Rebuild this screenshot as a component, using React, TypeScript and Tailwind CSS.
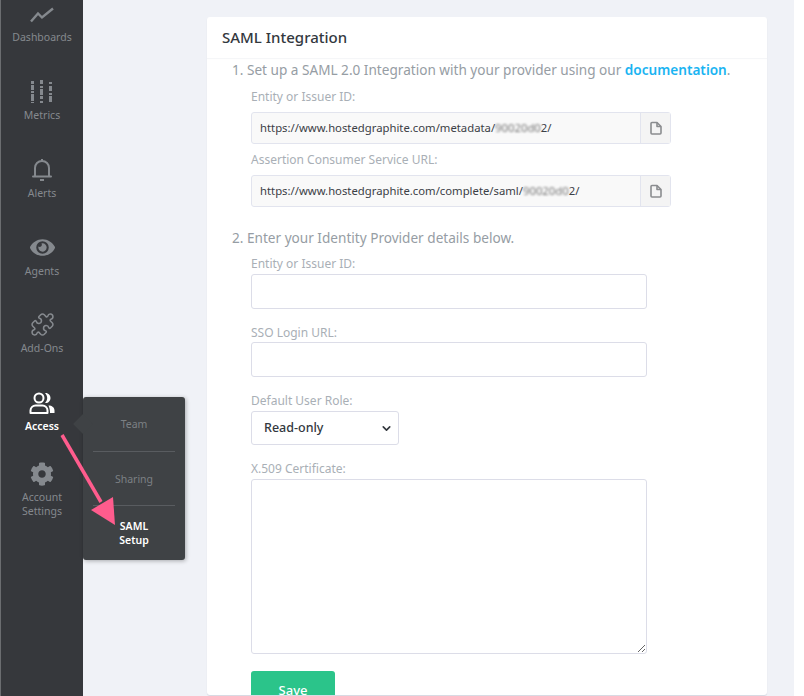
import { ChevronDown, Puzzle } from 'lucide-react'
import type { ReactNode } from 'react'
import { FaCog, FaEye } from 'react-icons/fa'

const font = 'font-["Noto_Sans",sans-serif]'

function DashboardsIcon() {
  return (
    <svg className="mb-[3px]" width="24" height="16" viewBox="0 0 24 16" fill="none" stroke="currentColor" strokeWidth="2.400">
      <polyline points="1,14.500 8,6.500 12,10.500 23,1.500" />
    </svg>
  )
}

function MetricsIcon() {
  return (
    <svg width="22" height="24" viewBox="0 0 22 24" fill="currentColor">
      <rect x="0" y="1" width="3" height="3" />
      <rect x="0" y="5" width="3" height="5" />
      <rect x="0" y="11" width="3" height="2" />
      <rect x="0" y="14" width="3" height="7" />
      <rect x="0" y="22" width="3" height="1" />
      <rect x="9" y="0" width="3" height="4" />
      <rect x="9" y="6" width="3" height="2" />
      <rect x="9" y="9" width="3" height="6" />
      <rect x="9" y="16" width="3" height="3" />
      <rect x="9" y="21" width="3" height="2" />
      <rect x="18" y="2" width="3" height="2" />
      <rect x="18" y="6" width="3" height="5" />
      <rect x="18" y="13" width="3" height="2" />
      <rect x="18" y="16" width="3" height="6" />
    </svg>
  )
}

function BellIcon() {
  return (
    <svg width="20" height="24" viewBox="0 0 20 24" fill="none" stroke="currentColor" strokeWidth="2">
      <path d="M10 1v2" />
      <path d="M3 18V10c0-4 3-7 7-7s7 3 7 7v8" />
      <path d="M1 18.500h18" strokeLinecap="round" />
      <path d="M8 22h4" strokeWidth="2" />
    </svg>
  )
}

function AccessIcon() {
  return (
    <svg width="27" height="23" viewBox="0 0 27 23" fill="none">
      <circle cx="10" cy="6" r="4.500" stroke="currentColor" strokeWidth="2" />
      <path d="M1.500 21v-2.500c0-3 2.500-5 5-5h7c2.500 0 5 2 5 5V21z" stroke="currentColor" strokeWidth="2" strokeLinejoin="round" />
      <path d="M16 1c3-.5 5.500 2 5.500 5s-2.500 5.500-5.500 5c1.500-1.500 2.200-3.200 2.200-5S17.500 2.500 16 1z" fill="currentColor" />
      <path d="M19.500 13.500c3.500 0 6 2 6 5V21h-4.500c0-3-.5-5-1.500-7.500z" fill="currentColor" />
    </svg>
  )
}

function NavItem({ icon, label, active }: { icon: ReactNode; label: ReactNode; active?: boolean }) {
  return (
    <div className={`flex h-[78px] flex-col items-center ${active ? 'text-white' : 'text-[#85898e]'}`}>
      <div className="flex h-[32px] items-end justify-center">{icon}</div>
      <span className={`mt-[4px] text-center text-[10.500px] leading-[14px] ${active ? 'font-semibold' : ''}`}>{label}</span>
    </div>
  )
}

function CopyIcon() {
  return (
    <svg width="12" height="14" viewBox="0 0 12 14" fill="none" stroke="#8a8c8f" strokeWidth="1.600">
      <path d="M1 2.500q0-1 1-1h5l4 4v6.500q0 1-1 1H2q-1 0-1-1z" strokeLinejoin="round" />
      <path d="M7 1.500v4h4" strokeLinejoin="round" />
    </svg>
  )
}

function CopyField({ prefix, suffix }: { prefix: string; suffix: string }) {
  return (
    <div className="flex h-[32px] w-[420px] rounded-[3px] border border-[#e2e4ee] bg-[#f9f9f9]">
      <div className="flex w-[389px] items-center border-r border-[#e2e4ee] pl-[8px] text-[11.300px] text-[#3b4046]">
        <span>{prefix}</span>
        <span className="inline-block text-[#777777] blur-[1px]">90020d0</span>
        <span>{suffix}</span>
      </div>
      <div className="flex flex-1 items-center justify-center bg-[#f4f4f4]">
        <CopyIcon />
      </div>
    </div>
  )
}

function Label({ children, className = '' }: { children: ReactNode; className?: string }) {
  return <label className={`block text-[12px] leading-[16px] text-[#a9afb6] ${className}`}>{children}</label>
}

function App() {
  return (
    <div className={`relative flex h-[696px] w-[804px] overflow-hidden bg-white ${font}`}>
      <aside className="h-full w-[83px] shrink-0 overflow-hidden border-l border-[#6b6d70] bg-[#36383c] pt-[1px]">
        <div className="-mt-[7px]">
          <NavItem icon={<DashboardsIcon />} label="Dashboards" />
          <NavItem icon={<MetricsIcon />} label="Metrics" />
          <NavItem icon={<BellIcon />} label="Alerts" />
          <NavItem icon={<FaEye size={25} />} label="Agents" />
          <div className="-mt-[1px]">
            <NavItem icon={<Puzzle size={25} strokeWidth={1.500} />} label="Add-Ons" />
          </div>
          <NavItem icon={<AccessIcon />} label="Access" active />
          <div className="-mt-[7px]">
            <NavItem icon={<FaCog size={24} />} label={<>Account<br />Settings</>} />
          </div>
        </div>
      </aside>

      <main className="h-full w-[711px] shrink-0 bg-[#f0f2f7] pl-[124px] pt-[17px]">
        <section className="h-[678px] w-[560px] overflow-hidden rounded-[3px] bg-white shadow-[0_1px_1px_#d5d7e0]">
          <h2 className="flex h-[41px] items-center pl-[15px] text-[15px] font-medium text-[#33383e] shadow-[0_1px_1px_#f5f6f8]">SAML Integration</h2>
          <div className="pl-[25px] text-[13.600px] text-[#969da4]">
            <p className="mt-[2px] h-[19px] leading-[19px]">
              1. Set up a SAML 2.0 Integration with your provider using our{' '}
              <a className="font-semibold text-[#1ab4f2]">documentation</a>.
            </p>
            <div className="pl-[19px]">
              <Label className="mt-[10px]">Entity or Issuer ID:</Label>
              <div className="mt-[7px]">
                <CopyField prefix="https://www.hostedgraphite.com/metadata/" suffix="2/" />
              </div>
              <Label className="mt-[8px]">Assertion Consumer Service URL:</Label>
              <div className="mt-[7px]">
                <CopyField prefix="https://www.hostedgraphite.com/complete/saml/" suffix="2/" />
              </div>
            </div>
            <p className="mt-[21px] h-[19px] leading-[19px]">2. Enter your Identity Provider details below.</p>
            <div className="pl-[19px]">
              <Label className="mt-[9px]">Entity or Issuer ID:</Label>
              <input className="mt-[2px] block h-[35px] w-[396px] rounded-[3px] border border-[#dcdde8] bg-white" />
              <Label className="mt-[16px]">SSO Login URL:</Label>
              <input className="mt-[1px] block h-[35px] w-[396px] rounded-[3px] border border-[#dcdde8] bg-white" />
              <Label className="mt-[16px]">Default User Role:</Label>
              <div className="mt-[2px] flex h-[34px] w-[148px] items-center justify-between rounded-[3px] border border-[#dcdde8] pl-[12px] pr-[5px] text-[12.500px] font-medium text-[#33383e]">
                <span>Read-only</span>
                <ChevronDown size={13} strokeWidth={3} />
              </div>
              <Label className="mt-[16px]">X.509 Certificate:</Label>
              <textarea className="mt-[2px] block h-[175px] w-[396px] rounded-[3px] border border-[#dcdde8] bg-white" />
              <button type="button" className="mt-[17px] h-[40px] w-[84px] rounded-[3px] bg-[#2bc48a] text-[13px] font-medium text-white">
                Save
              </button>
            </div>
          </div>
        </section>
      </main>

      {/* flyout menu */}
      <div className="absolute left-[83px] top-[397px] w-[102px] rounded-[3px] bg-[#3f4245] text-center text-[10.500px] leading-[14px] shadow-[1px_1px_4px_rgba(0,0,0,0.300)]">
        <div className="absolute -left-[7px] top-[20px] h-[14px] w-[14px] rotate-45 bg-[#3f4245]" />
        <div className="relative flex h-[54px] items-center justify-center text-[#7c8084]">Team</div>
        <div className="mx-[10px] border-t border-[#595c60]" />
        <div className="relative flex h-[53px] items-center justify-center text-[#7c8084]">Sharing</div>
        <div className="mx-[10px] border-t border-[#595c60]" />
        <div className="relative flex h-[54px] items-center justify-center font-semibold text-white">
          <span>SAML<br />Setup</span>
        </div>
      </div>

      {/* annotation arrow */}
      <svg className="absolute left-[55px] top-[430px]" width="70" height="100" viewBox="0 0 70 100">
        <line x1="7" y1="5" x2="46" y2="72" stroke="#ff5c8d" strokeWidth="3.500" />
        <polygon points="36,80 58,67 60,95" fill="#ff5c8d" />
      </svg>
    </div>
  )
}

export default App
